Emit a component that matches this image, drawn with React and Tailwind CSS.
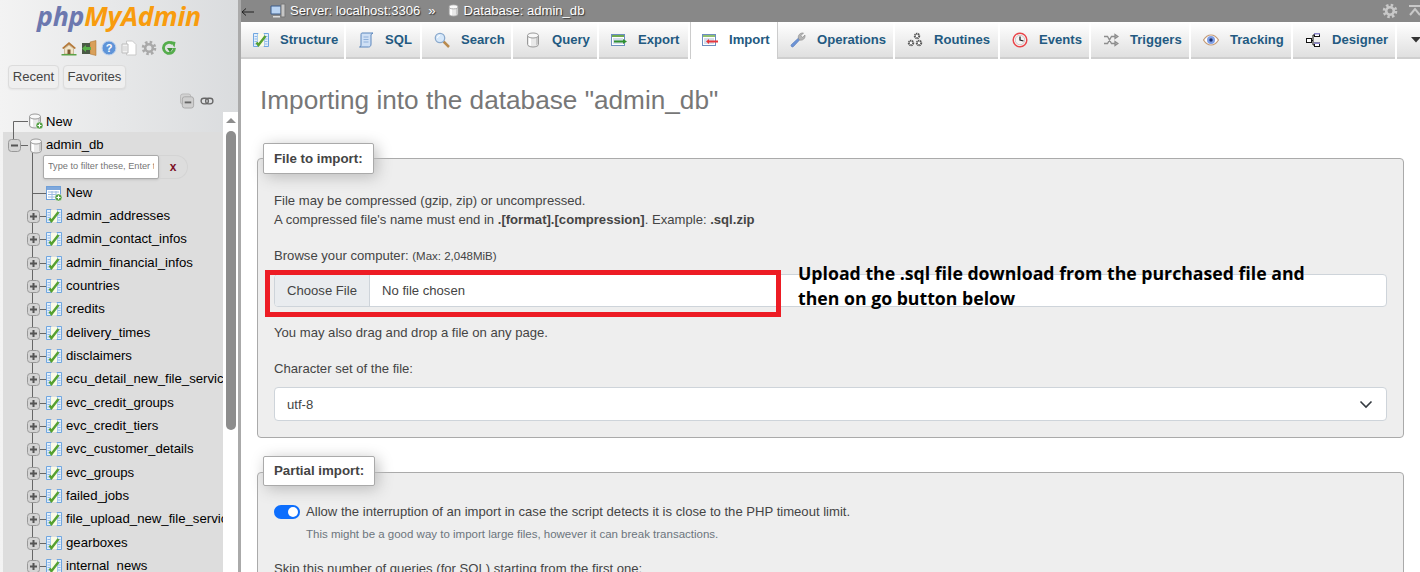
const TABLES = [
  'admin_addresses',
  'admin_contact_infos',
  'admin_financial_infos',
  'countries',
  'credits',
  'delivery_times',
  'disclaimers',
  'ecu_detail_new_file_services',
  'evc_credit_groups',
  'evc_credit_tiers',
  'evc_customer_details',
  'evc_groups',
  'failed_jobs',
  'file_upload_new_file_services',
  'gearboxes',
  'internal_news',
]

function Ico({ children, className = 'w-4 h-4' }) {
  return (
    <svg viewBox="0 0 16 16" className={`shrink-0 ${className}`} aria-hidden="true">
      {children}
    </svg>
  )
}

function DbShape() {
  return (
    <>
      <path d="M2.500 3.500v9c0 1.400 2.500 2.500 5.500 2.500s5.500-1.100 5.500-2.500v-9z" fill="#e9e9e9" stroke="#9a9a9a" />
      <path d="M4 5v8l2 1V5.500z" fill="#fff" />
      <path d="M11 6v7.500l2-1.200V5z" fill="#c9c9c9" />
      <ellipse cx="8" cy="3.500" rx="5.500" ry="2.500" fill="#f8f8f8" stroke="#9a9a9a" />
    </>
  )
}

function PlusBadge() {
  return (
    <>
      <circle cx="12.500" cy="12.500" r="3.500" fill="#4c9a3c" stroke="#fff" strokeWidth="0.500" />
      <path d="M10.500 12.500h4M12.500 10.500v4" stroke="#fff" strokeWidth="1.200" />
    </>
  )
}

function StructureShape() {
  return (
    <>
      <path d="M0.500 1.500h4.500v13H0.500zM11 1.500h4.500v13H11z" fill="#e4effb" stroke="#6fa6e0" />
      <path d="M5 2h6v12H5z" fill="#fbfbe6" />
      <path d="M1.500 4.500h2.500M1.500 7h2.500M1.500 9.500h2.500M1.500 12h2.500M12 4.500h2.500M12 7h2.500M12 9.500h2.500M12 12h2.500" stroke="#8fb8e8" />
      <path d="M3.500 10.500l2 2.500L12.500 4" fill="none" stroke="#55a030" strokeWidth="2.400" />
    </>
  )
}

function TableShape() {
  return (
    <>
      <rect x="0.500" y="1.500" width="14" height="13" fill="#fff" stroke="#6f9fd8" />
      <rect x="1" y="2" width="13" height="3" fill="#7fa8dc" />
      <path d="M2 7h11M2 9.500h11M2 12h11M6 6v8M10 6v8" stroke="#9cbbe2" />
    </>
  )
}

function ListTable({ arrow }) {
  return (
    <>
      <rect x="0.500" y="2.500" width="13" height="11" fill="#fff" stroke="#6c8ebf" />
      <rect x="1" y="3" width="12" height="2" fill={arrow === 'red' ? '#8fbf6f' : '#6faa50'} />
      <path d="M2 7h10M2 9h10M2 11h10" stroke="#a8bcd8" />
      {arrow === 'red' ? (
        <path d="M16 8.500H6v2h10zM7 7l-3 2.500L7 12z" fill="#e8343a" />
      ) : (
        <path d="M3 8.500h10v2H3zM12 7l4 2.500-4 2.500z" fill="#2f8f2f" />
      )}
    </>
  )
}

const ICONS = {
  Structure: <StructureShape />,
  SQL: (
    <>
      <path d="M4 1h11l-2 1.500V12c0 2-1 3-2.500 3H1.500C3 15 3 13.500 3 12V3c0-1 .2-2 1-2z" fill="#cfe0f5" stroke="#5b86bd" />
      <path d="M5.500 5h5M5.500 7.500h5M5.500 10h5" stroke="#8fb0da" />
    </>
  ),
  Search: (
    <>
      <path d="M9.500 9.500L15 15" stroke="#b98a4e" strokeWidth="2.500" />
      <circle cx="6" cy="6" r="4.700" fill="#d6e8fa" stroke="#8aa9cc" strokeWidth="1.300" />
      <path d="M3.500 6a2.500 2.500 0 0 1 2.500-2.500" fill="none" stroke="#fff" />
    </>
  ),
  Query: <DbShape />,
  Export: <ListTable arrow="green" />,
  Import: <ListTable arrow="red" />,
  Operations: (
    <>
      <path d="M1.500 12.500L9 5.500 10.500 7 3.500 14.500a1.400 1.400 0 0 1-2-2z" fill="#6d94d6" stroke="#4f74b5" strokeWidth="0.600" />
      <path d="M8.500 6.500C7.500 3.500 10 .5 13.500 1L11 3.500 12.500 5.500 15 3c.6 3.500-2.500 6-5.500 5z" fill="#b5b5b5" stroke="#888" strokeWidth="0.600" />
    </>
  ),
  Routines: (
    <g fill="#fff" stroke="#555" strokeWidth="1">
      <circle cx="10" cy="4" r="2.200" strokeDasharray="1.200 0.500" strokeWidth="2" />
      <circle cx="4" cy="11" r="2.200" strokeDasharray="1.200 0.500" strokeWidth="2" />
      <circle cx="12" cy="11" r="2.200" strokeDasharray="1.200 0.500" strokeWidth="2" />
    </g>
  ),
  Events: (
    <>
      <circle cx="8" cy="8" r="6.800" fill="#fff" stroke="#e8474b" strokeWidth="1.500" />
      <circle cx="8" cy="8" r="4.800" fill="#f4f4f4" stroke="#999" strokeWidth="0.500" />
      <path d="M8 4.500V8l3.500 1" fill="none" stroke="#222" strokeWidth="1.300" />
    </>
  ),
  Triggers: (
    <g fill="none" stroke="#8d8d8d" strokeWidth="1.300">
      <path d="M1 4.500h3.500l4 7H13M1 11.500h3.500l4-7H13" />
      <path d="M12 2.500l3 2-3 2zM12 9.500l3 2-3 2z" fill="#bbb" />
    </g>
  ),
  Tracking: (
    <>
      <path d="M.500 8C3 4 5.500 3 8 3s5 1 7.500 5C13 12 10.500 13 8 13S3 12 .500 8z" fill="#fff" stroke="#c49a74" strokeWidth="1.200" />
      <circle cx="8" cy="8" r="4" fill="#7f9fe6" />
      <circle cx="8" cy="8" r="1.700" fill="#20306a" />
    </>
  ),
  Designer: (
    <g fill="#fff" stroke="#111">
      <rect x="9.500" y="1.500" width="5" height="3" />
      <rect x="1.500" y="6.500" width="5" height="4" />
      <rect x="9.500" y="11" width="5" height="3.500" />
      <path d="M6.500 8.500H8V3h1.500M8 8.500v4.500h1.500" fill="none" />
      <path d="M9 1h6v1.500H9zM9 10.500h6V12H9z" fill="#8a84c8" stroke="none" />
    </g>
  ),
}

const TABS = [
  { name: 'Structure', cls: 'w-[105px]' },
  { name: 'SQL', cls: 'w-[76px]' },
  { name: 'Search', cls: 'w-[91px]' },
  { name: 'Query', cls: 'w-[86px]' },
  { name: 'Export', cls: 'w-[91px]' },
  { name: 'Import', cls: 'w-[88px]', active: true },
  { name: 'Operations', cls: 'w-[117px]' },
  { name: 'Routines', cls: 'w-[105px]' },
  { name: 'Events', cls: 'w-[91px]' },
  { name: 'Triggers', cls: 'w-[100px]' },
  { name: 'Tracking', cls: 'w-[102px]' },
  { name: 'Designer', cls: 'w-[104px]' },
]

function Gear({ color = '#c4c4c4' }) {
  return (
    <Ico>
      <circle cx="8" cy="8" r="5.800" fill="none" stroke={color} strokeWidth="3" strokeDasharray="2.400 2.150" />
      <circle cx="8" cy="8" r="3.800" fill="none" stroke={color} strokeWidth="2.600" />
    </Ico>
  )
}

function Expander({ open, x, y }) {
  return (
    <g transform={`translate(${x} ${y})`}>
      <rect x="0.500" y="0.500" width="12" height="12" rx="3" fill="#d4d4d4" stroke="#999" />
      <path d="M3 6.500h7" stroke="#555" strokeWidth="2" />
      {!open && <path d="M6.500 3v7" stroke="#555" strokeWidth="2" />}
    </g>
  )
}

function NewDbRow() {
  return (
    <div className="flex h-[20px] items-center">
      <svg width="46" height="28" viewBox="0 0 46 28" className="-mb-[8px] shrink-0" aria-hidden="true">
        <path d="M13.500 28V9.500H28" fill="none" stroke="#666" />
        <g transform="translate(27 1)">
          <DbShape />
          <PlusBadge />
        </g>
      </svg>
      <span className="text-[13.100px] text-black">New</span>
    </div>
  )
}

function DbRow() {
  return (
    <div className="flex h-[20px] items-center">
      <svg width="43" height="23" viewBox="0 0 43 23" className="shrink-0" aria-hidden="true">
        <path d="M18 11.500h7M29.500 19v4" fill="none" stroke="#666" />
        <Expander open x={5} y={5} />
        <g transform="translate(25 4)">
          <DbShape />
        </g>
      </svg>
      <span className="text-[13.100px] text-black">admin_db</span>
    </div>
  )
}

function FilterRow() {
  return (
    <div className="flex h-[26px] pl-[29px]">
      <svg width="11" height="26" viewBox="0 0 11 26" className="shrink-0" aria-hidden="true">
        <path d="M0.500 0v26" stroke="#666" />
      </svg>
      <div className="flex h-[24px] w-[116px] items-center rounded-[2px] border border-[#aaa] bg-white px-[4px] text-[9.200px] text-[#757575] shadow-sm">
        <span className="overflow-hidden whitespace-nowrap">Type to filter these, Enter to search</span>
      </div>
      <div className="flex h-[24px] w-[29px] items-center justify-center rounded-r-full border border-l-0 border-[#d4d4d4] text-[12px] font-bold text-[#7c1128]">
        x
      </div>
    </div>
  )
}

function NewTableRow() {
  return (
    <div className="flex h-[23.330px] items-center">
      <svg width="59" height="24" viewBox="0 0 59 24" className="shrink-0" aria-hidden="true">
        <path d="M29.500 0v24M29.500 12.500H43" fill="none" stroke="#666" />
        <g transform="translate(43 4)">
          <TableShape />
          <PlusBadge />
        </g>
      </svg>
      <span className="ml-[4px] text-[13.100px] whitespace-nowrap text-black">New</span>
    </div>
  )
}

function TableRow({ name }) {
  return (
    <div className="flex h-[23.330px] items-center">
      <svg width="59" height="24" viewBox="0 0 59 24" className="shrink-0" aria-hidden="true">
        <path d="M29.500 0v24M36 12.500h7" fill="none" stroke="#666" />
        <Expander x={24} y={6} />
        <g transform="translate(43 4)">
          <StructureShape />
        </g>
      </svg>
      <span className="ml-[4px] text-[13.200px] whitespace-nowrap text-black">{name}</span>
    </div>
  )
}

function Sidebar() {
  return (
    <aside className="flex h-full w-[241px] shrink-0 flex-col border-r-[3px] border-[#aaa] bg-linear-to-r from-[#f3f3f3] to-[#dadcde]">
      <div className="flex h-[37px] items-start pl-[37px]">
        <span className="text-[26.700px] leading-[32px] font-bold tracking-[-0.2px] italic [font-family:'Open_Sans',sans-serif]">
          <span className="text-[#6c78af]">php</span>
          <span className="text-[#f89c0e]">MyAdmin</span>
        </span>
      </div>
      <div className="flex h-[22px] items-center justify-start gap-[4px] pl-[61px]">
        <Ico>
          <path d="M1 8l7-6 7 6-1.500 1L8 4.500 2.500 9z" fill="#b5793a" />
          <path d="M3.500 8.500L8 5l4.500 3.500V14h-9z" fill="#f2e5c8" stroke="#a88a5c" strokeWidth="0.500" />
          <path d="M6.500 9.500h3V14h-3z" fill="#7d5a34" />
          <path d="M0.500 14h15v1.500H.500z" fill="#5aa246" />
        </Ico>
        <Ico>
          <path d="M9 2l6-1.500v15L9 14z" fill="#d9a05a" stroke="#a66f2d" strokeWidth="0.500" />
          <path d="M1 3h8v11H1z" fill="#4b5a46" />
          <path d="M1 8.500L5 5v2h5v3H5v2z" fill="#59b04a" />
        </Ico>
        <Ico>
          <circle cx="8" cy="8" r="7" fill="#5f94d8" stroke="#c2d5ee" />
          <text x="8" y="12" textAnchor="middle" fontSize="11" fontWeight="700" fill="#fff" fontFamily="Liberation Sans, sans-serif">?</text>
        </Ico>
        <Ico>
          <path d="M5.500 1h6l3.500 3.500V15h-9.500z" fill="#fff" stroke="#c9c9c9" />
          <path d="M1 4h6v9H1z" fill="#f2f2f2" stroke="#bdbdbd" />
          <path d="M3 6v5M5 6v5" stroke="#cfcfcf" />
        </Ico>
        <Gear color="#a9a9a9" />
        <Ico>
          <path d="M13.500 8a5.500 5.500 0 1 1-2-4.300" fill="none" stroke="#55ad4c" strokeWidth="2.800" />
          <path d="M9 1l5.500 1-1 5.500z" fill="#55ad4c" />
          <path d="M6 8h6l-3 4.500z" fill="#3f9137" />
        </Ico>
      </div>
      <div className="flex h-[34px] items-start gap-[4px] pt-[6px] pl-[8px]">
        <div className="flex h-[24px] w-[51px] items-center justify-center rounded-[4px] border border-[#dcdcdc] bg-[#efefef] text-[13.100px] text-[#444] shadow-xs">
          Recent
        </div>
        <div className="flex h-[24px] w-[63px] items-center justify-center rounded-[4px] border border-[#dcdcdc] bg-[#efefef] text-[13.100px] text-[#444] shadow-xs">
          Favorites
        </div>
      </div>
      <div className="flex h-[19px] items-start gap-[5px] pl-[180px]">
        <Ico className="h-[16px] w-[15px]">
          <rect x="0.500" y="0.500" width="11" height="11" rx="2.500" fill="#d2d2d2" stroke="#b8b8b8" />
          <rect x="2.500" y="3.500" width="12" height="12" rx="2.500" fill="#cfcfcf" stroke="#a8a8a8" />
          <path d="M5 9.500h7" stroke="#666" strokeWidth="2" />
        </Ico>
        <Ico className="mt-[2px] h-[13px] w-[14px]">
          <rect x="0.700" y="4" width="9" height="7" rx="3.500" fill="none" stroke="#666" strokeWidth="1.600" />
          <rect x="6.300" y="4" width="9" height="7" rx="3.500" fill="none" stroke="#666" strokeWidth="1.600" />
        </Ico>
      </div>
      <div className="flex min-h-0 flex-1">
        <div className="min-w-0 flex-1 overflow-hidden">
          <NewDbRow />
          <div className="ml-[3px] h-full bg-[#dddddd] pt-[3px]">
            <DbRow />
            <FilterRow />
            <NewTableRow />
            {TABLES.map((t) => (
              <TableRow key={t} name={t} />
            ))}
          </div>
        </div>
        <div className="flex w-[15px] shrink-0 flex-col bg-white pl-[3px]">
          <svg width="10" height="19" viewBox="0 0 10 19" className="shrink-0" aria-hidden="true">
            <path d="M0 11l5-5 5 5z" fill="#8d8d8d" />
          </svg>
          <div className="h-[299px] w-[10px] rounded-t-[5px] rounded-b-[5px] bg-[#8d8d8d]" />
        </div>
      </div>
    </aside>
  )
}

function TopBar() {
  return (
    <div className="flex h-[22px] shrink-0 items-center bg-[#888888] pb-[1px] text-[13.100px] text-white [text-shadow:1px_1px_1px_#333]">
      <svg width="29" height="12" viewBox="0 0 29 12" className="shrink-0" aria-hidden="true">
        <path d="M1 7h12M5 3.500L1 7l4 3.500" fill="none" stroke="#222" />
      </svg>
      <Ico>
        <path d="M1 3h10v8H1z" fill="#b9d3f2" stroke="#3c5c8a" />
        <path d="M11 1h4v13h-4z" fill="#c6c6c6" stroke="#777" />
        <path d="M3 13h7v1.500H3z" fill="#ddd" />
      </Ico>
      <span className="ml-[4px]">Server: localhost:3306</span>
      <span className="ml-[8px]">»</span>
      <Ico className="ml-[11px] h-[15px] w-[13px]">
        <DbShape />
      </Ico>
      <span className="ml-[4px]">Database: admin_db</span>
      <span className="ml-auto">
        <Gear color="#c8c8c8" />
      </span>
      <svg width="12" height="12" viewBox="0 0 12 12" className="mr-[-1px] ml-[11px] shrink-0" aria-hidden="true">
        <path d="M0 1h12M1 10l5-6 5 6" fill="none" stroke="#c8c8c8" strokeWidth="2" />
      </svg>
    </div>
  )
}

function TabBar() {
  return (
    <nav className="flex h-[37px] shrink-0 bg-linear-to-b from-white to-[#dedede] shadow-[inset_0_-2px_0_#cfcfcf]">
      {TABS.map((t) => (
        <div
          key={t.name}
          className={`flex shrink-0 items-center pb-[2px] text-[13.100px] font-bold text-[#235a81] ${t.cls} ${
            t.active ? 'border-x border-[#cccccc] bg-white pl-[11px]' : 'border-r-2 border-white pl-[12px]'
          }`}
        >
          <Ico>{ICONS[t.name]}</Ico>
          <span className="ml-[11px]">{t.name}</span>
        </div>
      ))}
      <div className="flex flex-1 items-center justify-end pb-[3px]">
        <svg width="9" height="7" viewBox="0 0 9 7" aria-hidden="true">
          <path d="M0 1h10L5 6.500z" fill="#333" />
        </svg>
      </div>
    </nav>
  )
}

function Legend({ children, className }) {
  return (
    <div
      className={`ml-[5px] flex w-fit items-center rounded-[2px] border border-[#aaa] bg-white text-[13.300px] font-bold text-[#444] shadow-[3px_3px_15px_#bbb] ${className}`}
    >
      {children}
    </div>
  )
}

function ImportPanel() {
  return (
    <section className="relative h-[280px] shrink-0 rounded-[4px] border border-[#aaa] bg-[#eeeeee]">
      <Legend className="-mt-[16px] h-[31px] px-[10px]">File to import:</Legend>
      <div className="px-[16px] pt-[17px] text-[13.100px] leading-[19px] text-[#444]">
        <p>File may be compressed (gzip, zip) or uncompressed.</p>
        <p>
          A compressed file's name must end in <b>.[format].[compression]</b>. Example: <b>.sql.zip</b>
        </p>
        <p className="mt-[17px]">
          Browse your computer: <small className="text-[11.500px]">(Max: 2,048MiB)</small>
        </p>
        <div className="mt-[8px] flex h-[33px] overflow-hidden rounded-[4px] border border-[#ced4da] bg-white">
          <div className="flex w-[95px] items-center justify-center border-r border-[#ced4da] bg-[#e9ecef]">Choose File</div>
          <div className="flex items-center pl-[12px]">No file chosen</div>
        </div>
        <p className="mt-[16px]">You may also drag and drop a file on any page.</p>
        <p className="mt-[17px]">Character set of the file:</p>
        <div className="mt-[9px] flex h-[34px] items-center justify-between rounded-[4px] border border-[#ced4da] bg-white px-[12px]">
          utf-8
          <svg width="16" height="16" viewBox="0 0 16 16" aria-hidden="true">
            <path d="M2.500 5.500L8 11l5.500-5.500" fill="none" stroke="#343a40" strokeWidth="1.600" />
          </svg>
        </div>
      </div>
      {/* markup drawn over the screenshot */}
      <div className="absolute top-[111px] left-[7px] h-[47px] w-[516px] border-[5px] border-[#ed1c24]" />
      <p className="absolute top-[102px] left-[540px] w-[560px] text-[17.700px] leading-[25px] font-bold text-black [font-family:'Open_Sans',sans-serif]">
        Upload the .sql file download from the purchased file and
        <br />
        then on go button below
      </p>
    </section>
  )
}

function PartialPanel() {
  return (
    <section className="mt-[34px] flex-1 rounded-[4px] border border-[#aaa] bg-[#eeeeee]">
      <Legend className="-mt-[17px] h-[30px] px-[10px]">Partial import:</Legend>
      <div className="px-[16px] pt-[16px] text-[13.100px] leading-[19px] text-[#444]">
        <div className="flex items-center">
          <div className="flex h-[14px] w-[26px] items-center justify-end rounded-full bg-[#0d6efd] pr-[2px]">
            <div className="h-[10px] w-[10px] rounded-full bg-white" />
          </div>
          <span className="ml-[6px]">Allow the interruption of an import in case the script detects it is close to the PHP timeout limit.</span>
        </div>
        <p className="mt-[4px] ml-[32px] text-[11.500px] text-[#6c757d]">This might be a good way to import large files, however it can break transactions.</p>
        <p className="mt-[15px]">Skip this number of queries (for SQL) starting from the first one:</p>
      </div>
    </section>
  )
}

export default function App() {
  return (
    <div className="flex h-[572px] w-[1420px] overflow-hidden bg-white font-['Liberation_Sans',Arial,sans-serif]">
      <Sidebar />
      <main className="flex min-w-0 flex-1 flex-col">
        <TopBar />
        <TabBar />
        <div className="flex min-h-0 flex-1 flex-col px-[16px]">
          <h1 className="mt-[25px] mb-[42px] h-[32px] pl-[3px] text-[26.200px] leading-[32px] font-normal text-[#777]">
            Importing into the database "admin_db"
          </h1>
          <ImportPanel />
          <PartialPanel />
        </div>
      </main>
    </div>
  )
}
